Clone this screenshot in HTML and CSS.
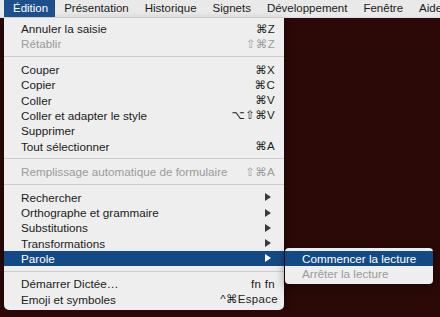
FILE: index.html
```html
<!DOCTYPE html>
<html lang="fr">

<head>
    <meta charset="UTF-8">
    <meta name="viewport" content="width=device-width, initial-scale=1.0">
    <title>Menu Édition</title>
    <link rel="stylesheet" href="styles.css">
</head>

<body>

    <nav class="menubar">
        <span class="menubar-item active">Édition</span>
        <span class="menubar-item">Présentation</span>
        <span class="menubar-item">Historique</span>
        <span class="menubar-item">Signets</span>
        <span class="menubar-item">Développement</span>
        <span class="menubar-item">Fenêtre</span>
        <span class="menubar-item">Aide</span>
    </nav>

    <div class="dropdown">
        <div class="item"><span>Annuler la saisie</span><span class="keys">⌘Z</span></div>
        <div class="item disabled"><span>Rétablir</span><span class="keys">⇧⌘Z</span></div>
        <div class="sep"></div>

        <div class="item"><span>Couper</span><span class="keys">⌘X</span></div>
        <div class="item"><span>Copier</span><span class="keys">⌘C</span></div>
        <div class="item"><span>Coller</span><span class="keys">⌘V</span></div>
        <div class="item"><span>Coller et adapter le style</span><span class="keys">⌥⇧⌘V</span></div>
        <div class="item"><span>Supprimer</span></div>
        <div class="item"><span>Tout sélectionner</span><span class="keys">⌘A</span></div>
        <div class="sep"></div>

        <div class="item disabled"><span>Remplissage automatique de formulaire</span><span class="keys">⇧⌘A</span></div>
        <div class="sep"></div>

        <div class="item"><span>Rechercher</span><span class="arrow"></span></div>
        <div class="item"><span>Orthographe et grammaire</span><span class="arrow"></span></div>
        <div class="item"><span>Substitutions</span><span class="arrow"></span></div>
        <div class="item"><span>Transformations</span><span class="arrow"></span></div>
        <div class="item selected has-sub"><span>Parole</span><span class="arrow"></span>
            <!-- submenu opened over the desktop -->
            <div class="submenu">
                <div class="item selected"><span>Commencer la lecture</span></div>
                <div class="item disabled"><span>Arrêter la lecture</span></div>
            </div>
        </div>
        <div class="sep"></div>

        <div class="item"><span>Démarrer Dictée…</span><span class="keys">fn fn</span></div>
        <div class="item"><span>Emoji et symboles</span><span class="keys wide">^⌘Espace</span></div>
    </div>

</body>

</html>
```

FILE: styles.css
```css
body {
    margin: 0;
    background-color: #2b0907;
    font-family: "Liberation Sans", Arial, "DejaVu Sans", sans-serif;
    font-size: 11.7px;
    color: #1b1b1b;
}

.menubar {
    display: flex;
    height: 18px;
    padding-left: 4px;
    background-color: #e9e9e9;
    border-bottom: 1px solid #dcdcdc;
    box-sizing: border-box;
    overflow: hidden;
    font-size: 11.5px;
}

.menubar-item {
    padding: 0 7px 0 9px;
    line-height: 17px;
    white-space: nowrap;
}

.menubar-item.active {
    background-color: #1d4f8d;
    color: white;
}

.dropdown {
    width: 280px;
    margin-left: 4px;
    padding: 3px 0 3px;
    background-color: #eeeeee;
    border-radius: 0 0 5px 5px;
    box-shadow: 0 4px 10px rgba(0, 0, 0, 0.45);
}

.item {
    position: relative;
    display: flex;
    justify-content: space-between;
    align-items: center;
    height: 15.3px;
    padding: 0 9px 0 17px;
    white-space: nowrap;
}

.item.disabled {
    color: #9b9b9b;
}

.item.selected {
    background-color: #134a86;
    color: white;
}

.keys {
    font-size: 11.5px;
    letter-spacing: 0.3px;
}

.keys.wide {
    margin-right: -3px;
}

/* small black triangle for submenus */
.arrow {
    width: 0;
    height: 0;
    margin-right: 4px;
    border-top: 4px solid transparent;
    border-bottom: 4px solid transparent;
    border-left: 6px solid #3a3a3a;
}

.item.selected .arrow {
    border-left-color: white;
}

.sep {
    height: 10.3px;
    display: flex;
    align-items: center;
}

.sep::before {
    content: "";
    flex: 1;
    height: 1px;
    background-color: #cdcdcd;
}

.submenu {
    position: absolute;
    top: -3px;
    left: 281px;
    width: 148px;
    padding: 3px 0 3px;
    background-color: #eeeeee;
    border-radius: 4px;
    box-shadow: 0 3px 10px rgba(0, 0, 0, 0.45);
    color: #1b1b1b;
}
```
